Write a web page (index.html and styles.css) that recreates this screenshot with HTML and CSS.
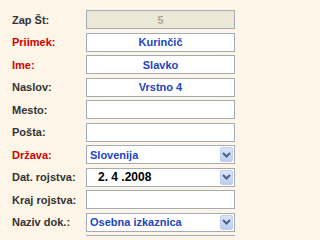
FILE: index.html
```html
<!DOCTYPE html>
<html>
<head>
<meta charset="utf-8">
<link rel="stylesheet" href="styles.css">
</head>
<body>
<div class="form">
  <div class="label">Zap Št:</div>
  <div class="field disabled center">5</div>

  <div class="label req">Priimek:</div>
  <div class="field center">Kurinčič</div>

  <div class="label req">Ime:</div>
  <div class="field center">Slavko</div>

  <div class="label">Naslov:</div>
  <div class="field center">Vrstno 4</div>

  <div class="label">Mesto:</div>
  <div class="field"></div>

  <div class="label">Pošta:</div>
  <div class="field"></div>

  <div class="label req">Država:</div>
  <div class="field select"><span class="val">Slovenija</span><span class="btn"><svg width="9" height="6" viewBox="0 0 9 6"><path d="M1 1 L4.5 4.5 L8 1" fill="none" stroke="#4a5f8c" stroke-width="2"/></svg></span></div>

  <div class="label">Dat. rojstva:</div>
  <div class="field select date"><span class="val">2. 4 .2008</span><span class="btn"><svg width="9" height="6" viewBox="0 0 9 6"><path d="M1 1 L4.5 4.5 L8 1" fill="none" stroke="#4a5f8c" stroke-width="2"/></svg></span></div>

  <div class="label">Kraj rojstva:</div>
  <div class="field"></div>

  <div class="label">Naziv dok.:</div>
  <div class="field select"><span class="val">Osebna izkaznica</span><span class="btn"><svg width="9" height="6" viewBox="0 0 9 6"><path d="M1 1 L4.5 4.5 L8 1" fill="none" stroke="#4a5f8c" stroke-width="2"/></svg></span></div>

  <div class="label"></div>
  <div class="field"></div>
</div>
</body>
</html>
```
FILE: styles.css
```css
html, body {
  margin: 0;
  padding: 0;
  overflow: hidden;
  background: #fdf5e7;
  height: 236px;
}
.form {
  display: grid;
  grid-template-columns: 74px 149px;
  grid-auto-rows: 19px;
  row-gap: 3.56px;
  padding: 10px 0 0 12px;
  font-family: "Liberation Sans", Arial, sans-serif;
  font-weight: bold;
  font-size: 11px;
}
.label {
  display: flex;
  align-items: center;
  color: #333333;
  white-space: nowrap;
}
.label.req {
  color: #d40000;
}
.field {
  box-sizing: border-box;
  border: 1px solid #a3abb6;
  background: #ffffff;
  color: #2346c0;
  display: flex;
  align-items: center;
  padding: 0 3px;
}
.field.center {
  justify-content: center;
}
.field.disabled {
  background: #ebe8d8;
  color: #a9a79b;
}
.field.select {
  padding: 0 1px 0 3px;
  justify-content: space-between;
}
.field.date .val {
  color: #000000;
  font-size: 12px;
  padding-left: 8px;
}
.btn {
  width: 13px;
  height: 15px;
  box-sizing: border-box;
  border: 1px solid #c0cff0;
  border-radius: 2px;
  background: linear-gradient(#dbe5fb, #bccdf3);
  display: flex;
  align-items: center;
  justify-content: center;
}
```
